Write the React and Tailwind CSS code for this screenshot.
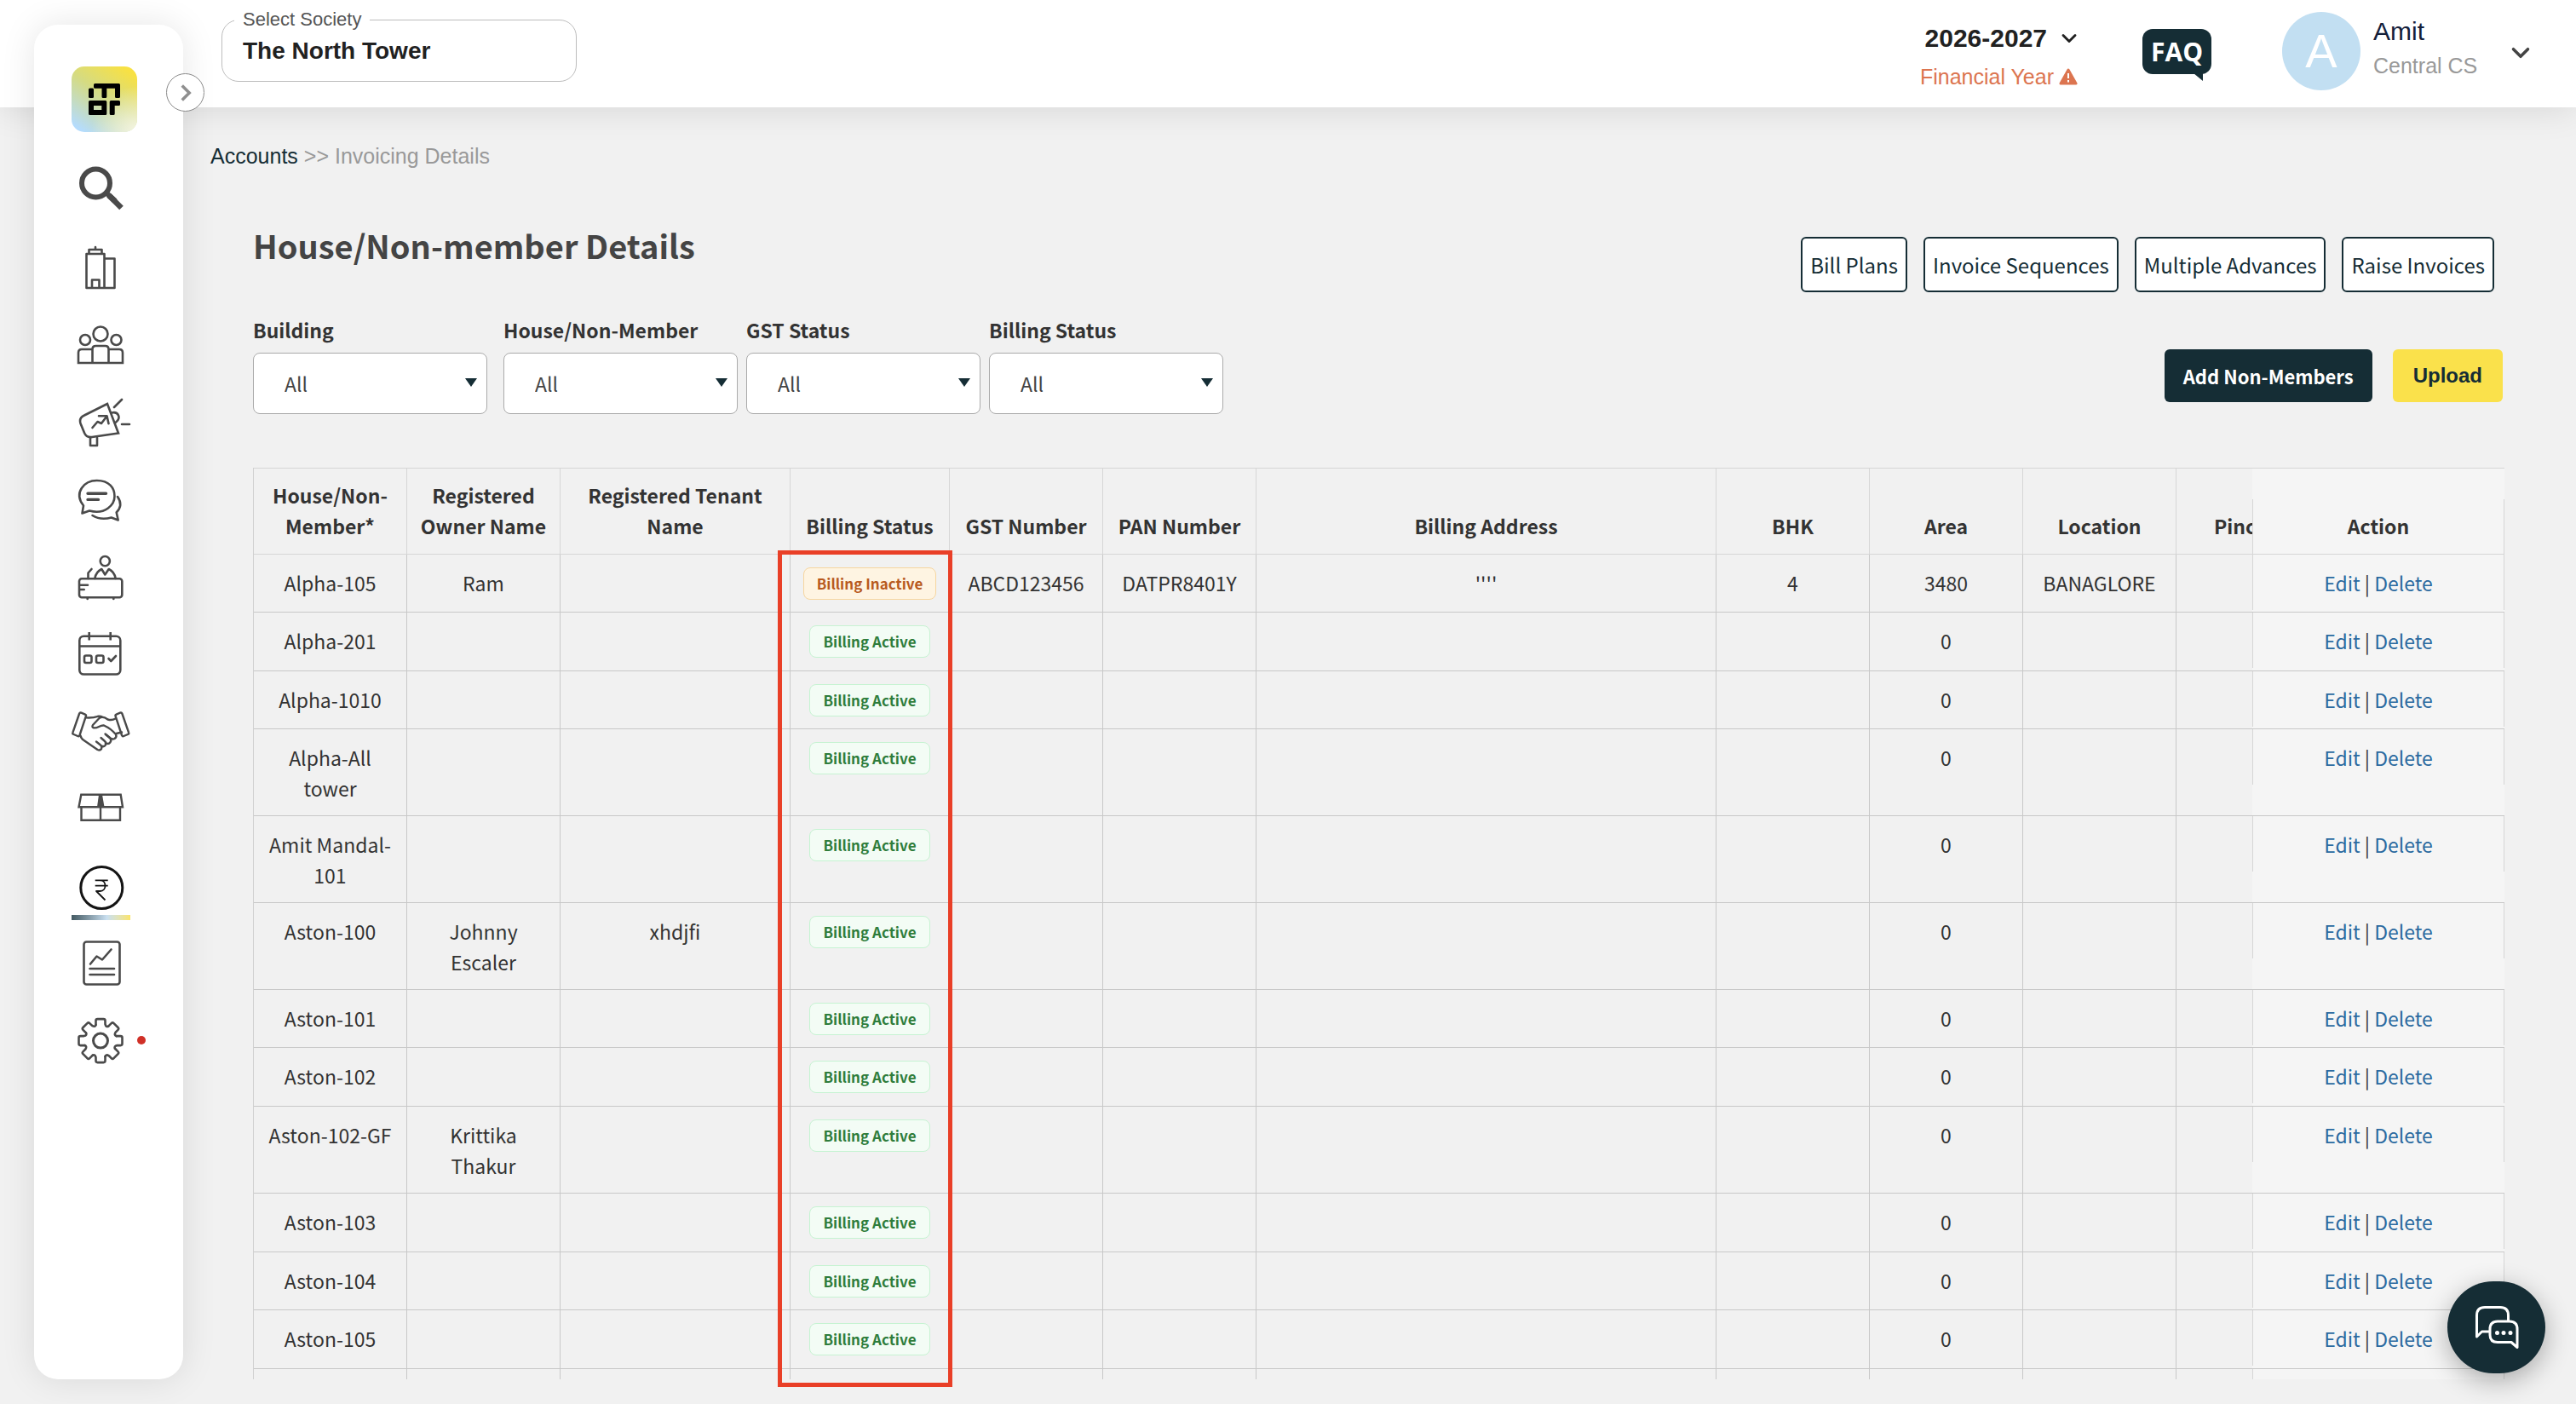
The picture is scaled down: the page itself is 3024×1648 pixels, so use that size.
// src/App.jsx - Invoicing details screen of the society accounts module
import React from 'react';
import { ChevronDown, ChevronRight } from 'lucide-react';

const iconProps = {
  width: 72,
  height: 68,
  viewBox: '0 0 72 68',
  fill: 'none',
  stroke: '#4a4a4a',
  strokeWidth: 2.6,
  strokeLinecap: 'round',
  strokeLinejoin: 'round',
  overflow: 'visible',
};

const menu = [
  {
    label: 'Search',
    icon: (
      <>
        <circle cx="28.5" cy="26" r="16.5" strokeWidth="6" />
        <path d="M44 40.5 58.5 55" strokeWidth="6.5" strokeLinecap="butt" />
        <path d="M44 40.5 50 46" strokeWidth="6.5" />
      </>
    ),
  },
  {
    label: 'Buildings',
    icon: (
      <path d="M17.5 18h21v40h-21zM38.5 23.5h12V58h-12zM20.5 18v-5h15v5M28 13V10M24 58v-9.5h8.5V58" />
    ),
  },
  {
    label: 'Residents',
    icon: (
      <>
        <circle cx="34" cy="21" r="8.5" />
        <circle cx="16" cy="28" r="6" />
        <circle cx="52.5" cy="28" r="6" />
        <path strokeLinejoin="miter" d="M24.5 55V39q0-4 4-4h11q4 0 4 4v16M24.5 39H12q-4 0-4 4v12h52V43q0-4-4-4H43.5" />
      </>
    ),
  },
  {
    label: 'Announcements',
    icon: (
      <>
        <path strokeLinejoin="miter" d="M42 12 15 25.5q-6.5 3-4.5 9.5L15 46q2.5 6 9 5l31-4.5Z" />
        <path d="M22 52v9h8v-9M47 22.5q6-1.5 8 3t-4 9M50 16l9-9M59 36h9M24.5 40l6-7 4.5 2 6.5-8.500M32 26.2h9.5l2 9" />
      </>
    ),
  },
  {
    label: 'Messages',
    icon: (
      <>
        <path d="M12.5 49.5 14 40.5C2 25 15 11 29.7 11S50.5 20 50.5 29.5 40 51.5 21 46.5Z" />
        <path d="M54 30q7 10-1.3 18.5l2 9-8-3Q34 58 24.5 52" />
        <path d="M19 26.3h21.5M19 33.4h12.5" strokeWidth="3.4" />
      </>
    ),
  },
  {
    label: 'Help desk',
    icon: (
      <>
        <rect x="9" y="35.3" width="50.3" height="22" rx="3" />
        <circle cx="39.3" cy="14.6" r="5.6" />
        <path d="M27.3 35q1.5-8 8-11l4 6.5 4.4-6.5q6.5 3 8 11M19.5 35v-6.5l4-4.5M10 42.8h9M10 48h4.7M18.7 57.5V59M49.3 57.5V59" />
      </>
    ),
  },
  {
    label: 'Bookings',
    icon: (
      <>
        <rect x="9.3" y="11.7" width="48" height="44.8" rx="5" />
        <path d="M9.3 23.5h48M20.7 7v9.5M45.7 7v9.5" strokeLinecap="butt" />
        <rect x="15" y="34.5" width="8.5" height="8.5" rx="2" />
        <rect x="29" y="34.5" width="8.5" height="8.5" rx="2" />
        <path d="m43.5 38 2.8 3 5.7-6" />
      </>
    ),
  },
  {
    label: 'Vendors',
    icon: (
      <g strokeWidth="2.4">
        <path d="M11.5 10.7 16 12.6q1.5.7.8 2.3L9.5 37q-.7 1.7-2.3 1L2.5 36q-1.7-.7-1-2.4L9 12q.8-2 2.5-1.3Z" />
        <path d="M57 10.7 52.5 12.6q-1.500.7-.8 2.300L59 37q.7 1.700 2.300 1l4.700-2q1.700-.7 1-2.400L59.500 12q-.8-2-2.500-1.300Z" />
        <path d="M17 16.4q8 .5 14-1.6 3-.6 5 .8M51.5 17.5q-4 2.5-9 1-6-4.500-10-1.500l-7.500 8q-1.500 2.500 1 3.300c5 1 7-3.500 12-2.800q8 3.500 14 10.500 1.500 3-1.500 5-3 1.500-6-1.500l-5-4" />
        <path d="M10.5 37.5q1 4 4 5.5l16 11q3 1.3 4.500-1 1-3-1-4.500l-5-4M34 48.500q3 3 5.500.5 2-3-.5-5L34.500 40M39.800 46q3.500 2 5.500-.5t0-5L40.500 36.500M52.500 35l6.500-1.500" />
      </g>
    ),
  },
  {
    label: 'Inventory',
    icon: (
      <>
        <path strokeLinejoin="miter" strokeWidth="2.4" d="M11.3 15.7h46.4L60 30.2H8.5ZM11.5 30.2v15.5H57V30.2M34 30v15" />
        <path d="M32 15.7h4l2.5 14.5h-8.5Z" fill="#4a4a4a" stroke="none" />
      </>
    ),
  },
  {
    label: 'Accounts',
    active: true,
    icon: (
      <g stroke="#141414">
        <circle cx="35.3" cy="34" r="24.5" strokeWidth="3" />
        <path strokeWidth="1.8" strokeLinecap="butt" d="M27.7 25.3h15M27.7 31.7h15M29 25.3h4.5c8 0 8 12.7 0 12.7H29l10.5 10.5" />
      </g>
    ),
  },
  {
    label: 'Reports',
    icon: (
      <>
        <rect x="14.5" y="6.5" width="42" height="50" rx="3" />
        <path d="m22 32.5 7.5-9 6.5 4 10.5-12M21.5 38h28.5M21.5 45h28.5" />
      </>
    ),
  },
  {
    label: 'Settings',
    dot: true,
    icon: (
      <g transform="translate(34 31.6)">
        <circle r="8.5" strokeWidth="3" />
        {[0, 45, 90, 135, 180, 225, 270, 315].map((angle) => (
          <path
            key={angle}
            transform={`rotate(${angle})`}
            d="M-5.5-18.5V-23.5Q-5.5-25.5-3.5-25.5H3.5Q5.5-25.5 5.5-23.5V-19.5Q6.5-15.5 9.2-17"
          />
        ))}
      </g>
    ),
  },
];

const filters = ['Building', 'House/Non-Member', 'GST Status', 'Billing Status'];

const columns = [
  { title: 'House/Non-Member*', width: 'w-[180px]' },
  { title: 'Registered Owner Name', width: 'w-[180px]' },
  { title: 'Registered Tenant Name', width: 'w-[270px]' },
  { title: 'Billing Status', width: 'w-[187px]' },
  { title: 'GST Number', width: 'w-[180px]' },
  { title: 'PAN Number', width: 'w-[180px]' },
  { title: 'Billing Address', width: 'w-[540px]' },
  { title: 'BHK', width: 'w-[180px]' },
  { title: 'Area', width: 'w-[180px]' },
  { title: 'Location', width: 'w-[180px]' },
  { title: 'Pincode', width: 'w-[180px]' },
];

const rows = [
  { house: 'Alpha-105', owner: 'Ram', inactive: true, gst: 'ABCD123456', pan: 'DATPR8401Y', address: "''''", bhk: '4', area: '3480', location: 'BANAGLORE' },
  { house: 'Alpha-201', area: '0' },
  { house: 'Alpha-1010', area: '0' },
  { house: 'Alpha-All tower', area: '0' },
  { house: 'Amit Mandal-101', area: '0' },
  { house: 'Aston-100', owner: 'Johnny Escaler', tenant: 'xhdjfi', area: '0' },
  { house: 'Aston-101', area: '0' },
  { house: 'Aston-102', area: '0' },
  { house: 'Aston-102-GF', owner: 'Krittika Thakur', area: '0' },
  { house: 'Aston-103', area: '0' },
  { house: 'Aston-104', area: '0' },
  { house: 'Aston-105', area: '0' },
];

function Sidebar() {
  return (
    <aside className="absolute left-10 top-[29px] bottom-[29px] w-[175px] rounded-[28px] bg-white pl-11 pt-[49px] shadow-[0_0_40px_rgba(0,0,0,0.1)]">
      <svg width="77" height="77" viewBox="0 0 77 77" role="img" aria-label="Logo">
        <defs>
          <linearGradient id="logo-bg" x1="0.2" y1="1" x2="0.85" y2="0.05">
            <stop offset="0" stopColor="#b5dcfc" />
            <stop offset="0.55" stopColor="#d5db82" />
            <stop offset="1" stopColor="#f8e143" />
          </linearGradient>
          <radialGradient id="logo-glow" cx="1" cy="1" r="0.7">
            <stop offset="0" stopColor="#f6f6e4" />
            <stop offset="1" stopColor="#f6f6e4" stopOpacity="0" />
          </radialGradient>
        </defs>
        <rect width="77" height="77" rx="15" fill="url(#logo-bg)" />
        <rect width="77" height="77" rx="15" fill="url(#logo-glow)" />
        <rect x="20" y="25.5" width="6" height="11.5" rx="1.5" />
        <path d="M27.5 20H55.5q1.5 0 1.5 1.5V35.5q0 1.5-1.5 1.5H52.5q-1.5 0-1.5-1.5V25.7H41.3V35.5q0 1.5-1.5 1.5H37q-1.5 0-1.5-1.5V25.7H27.5q-1.5 0-1.5-1.5V21.5q0-1.5 1.5-1.5Z" />
        <path fillRule="evenodd" d="M21.5 40H39.8q1.5 0 1.5 1.5V55.5q0 1.5-1.5 1.5H21.5q-1.5 0-1.5-1.5V41.5q0-1.5 1.5-1.5ZM26 46v5h9.3v-5Z" />
        <path d="M46.2 40H55.5q1.5 0 1.5 1.5v3q0 1.5-1.5 1.5H50.7V55.5q0 1.5-1.5 1.5H46.2q-1.5 0-1.5-1.5V41.5q0-1.5 1.5-1.5Z" />
      </svg>
      <button
        type="button"
        aria-label="Expand menu"
        className="absolute -right-[25px] top-[57px] flex size-[45px] items-center justify-center rounded-full border border-[#8a8a8a] bg-white text-[#8f8f8f]"
      >
        <ChevronRight size={34} strokeWidth={2.5} strokeLinecap="butt" strokeLinejoin="miter" />
      </button>
      <nav className="mt-[34px] flex flex-col gap-[23px]">
        {menu.map((item) => (
          <button key={item.label} type="button" aria-label={item.label} className="relative h-[68px] w-[72px]">
            <svg {...iconProps}>{item.icon}</svg>
            {item.active && (
              <span className="absolute left-0 top-[66px] h-1.5 w-[69px] bg-linear-to-r from-[#445a63] via-[#c9dff0] via-60% to-[#fbe467]" />
            )}
            {item.dot && <span className="absolute left-[77px] top-[26px] size-2.5 rounded-full bg-[#d03027]" />}
          </button>
        ))}
      </nav>
    </aside>
  );
}

function Header() {
  return (
    <header className="flex h-[126px] shrink-0 items-start bg-white pl-[260px] pr-[74px] font-['Liberation_Sans',sans-serif] shadow-[0_0_40px_rgba(0,0,0,0.12)]">
      <fieldset className="mt-2.5 h-[86px] w-[417px] rounded-[20px] border border-[#bdbdbd] pl-3.5">
        <legend className="px-2.5 text-[22px] leading-[26px] text-[#555]">
          <label htmlFor="society">Select Society</label>
        </legend>
        <input
          id="society"
          defaultValue="The North Tower"
          className="mt-1.5 w-[380px] px-2.5 text-[28px] leading-9 font-bold text-[#212121] outline-none"
        />
      </fieldset>

      <div className="ml-auto flex items-start">
        <div className="mt-[27px] flex flex-col items-end">
          <button type="button" className="-mr-1 flex items-center gap-3 text-[30px] leading-9 font-bold text-[#212121]">
            2026-2027
            <ChevronDown size={28} strokeWidth={2.5} />
          </button>
          <p className="mt-[9px] flex items-center gap-1.5 text-[25px] leading-9 text-[#dc7550]">
            Financial Year
            <svg width="22" height="20" viewBox="0 0 22 20" aria-hidden="true">
              <path d="M11 2 20 18H2Z" fill="#dc7550" stroke="#dc7550" strokeWidth="3" strokeLinejoin="round" />
              <path d="M11 6v6M11 14v2.5" stroke="#fff" strokeWidth="2" />
            </svg>
          </p>
        </div>

        <button type="button" className="relative ml-[76px] mt-[34px] h-[53px] w-[81px] rounded-[12px] bg-[#152d35] font-['Open_Sans',sans-serif] text-[30px] leading-[53px] font-bold text-white">
          FAQ
          <svg className="absolute right-2.5 top-[52px]" width="11" height="9" viewBox="0 0 11 9" aria-hidden="true">
            <path d="M0 0h11v9Z" fill="#152d35" />
          </svg>
        </button>

        <div className="ml-[83px] mt-3.5 flex size-[92px] items-center justify-center rounded-full bg-[#c2dff2] text-[56px] leading-none text-white">
          A
        </div>
        <div className="ml-[15px] mt-[19px] w-[164px]">
          <p className="text-[30px] leading-9 text-[#14203a]">Amit</p>
          <p className="mt-1 text-[25px] leading-9 text-[#999]">Central CS</p>
        </div>
        <button type="button" aria-label="Account menu" className="mt-[45px] w-0 text-[#444]">
          <ChevronDown size={34} strokeWidth={2.5} className="-ml-2" />
        </button>
      </div>
    </header>
  );
}

function Filter({ name }) {
  const id = name.toLowerCase().replace(/\W+/g, '-');
  return (
    <div className="flex flex-col first:mr-[9px]">
      <label htmlFor={id} className="text-[23px] leading-9 font-bold text-[#333]">{name}</label>
      <div className="relative mt-[9px]">
        <select id={id} className="h-[72px] w-[275px] appearance-none rounded-lg border border-[#aaa] bg-white pl-9 text-[23px] text-[#444]">
          <option>All</option>
        </select>
        <span className="pointer-events-none absolute right-3 top-[30px] border-x-[7px] border-t-[10px] border-x-transparent border-t-[#152d35]" />
      </div>
    </div>
  );
}

function Badge({ inactive }) {
  return inactive ? (
    <span className="inline-block rounded-lg border border-[#f6d6a0] bg-[#fef4e2] px-[15px] align-top text-[17px] leading-9 font-bold whitespace-nowrap text-[#b85a1e]">Billing Inactive</span>
  ) : (
    <span className="inline-block rounded-lg border border-[#c6f3d2] bg-[#f3fcf5] px-[15px] align-top text-[17px] leading-9 font-bold whitespace-nowrap text-[#2f7d3c]">Billing Active</span>
  );
}

const cell = 'border-b border-r border-[#c8c8c8] px-3 pt-[15px] pb-3.5 align-top';

export default function App() {
  return (
    <div className="relative flex h-screen flex-col overflow-hidden bg-[#f1f1f1] font-['Noto_Sans_CJK_SC',sans-serif] text-[23px] leading-9 text-[#333]">
      <Header />
      <Sidebar />

      <main className="flex min-h-0 flex-1 flex-col pb-[29px] pl-[297px] pr-[84px]">
        <nav className="-ml-[50px] mt-[39px] font-['Liberation_Sans',sans-serif] text-[25px] text-[#999]">
          <a href="#accounts" className="text-[#152d35]">Accounts</a> &gt;&gt; Invoicing Details
        </nav>

        <div className="mt-[59px] flex items-start justify-between">
          <h1 className="text-[38px] leading-[56px] font-bold text-[#444]">House/Non-member Details</h1>
          <div className="mr-3 mt-[18px] flex gap-[19px]">
            {['Bill Plans', 'Invoice Sequences', 'Multiple Advances', 'Raise Invoices'].map((title) => (
              <button key={title} type="button" className="h-[65px] rounded-md border-2 border-[#152d35] bg-white px-[9px] text-[24px] text-[#152d35]">
                {title}
              </button>
            ))}
          </div>
        </div>

        <div className="mt-[26px] flex items-start justify-between">
          <div className="flex gap-2.5">
            {filters.map((name) => (
              <Filter key={name} name={name} />
            ))}
          </div>
          <div className="mr-0.5 mt-[41px] flex gap-6">
            <button type="button" className="h-[62px] rounded-md bg-[#152d35] px-[22px] text-[22px] font-bold text-white">Add Non-Members</button>
            <button type="button" className="h-[62px] rounded-md bg-[#fae14b] px-6 font-['Liberation_Sans',sans-serif] text-[24px] font-bold text-[#152d35]">Upload</button>
          </div>
        </div>

        <div className="relative mt-[63px] min-h-0 flex-1">
          <div className="h-full overflow-auto [scrollbar-width:none]">
            <table className="w-[2734px] table-fixed border-separate border-spacing-0 border-l border-[#d0d0d0] text-center">
              <thead>
                <tr>
                  {columns.map((column) => (
                    <th key={column.title} scope="col" className={`${column.width} h-[102px] border-y border-r border-[#d6d6d6] px-3 pt-[13px] pb-[15px] align-bottom font-bold`}>
                      {column.title}
                    </th>
                  ))}
                  <th scope="col" className="sticky right-0 w-[296px] border-y border-[#d6d6d6] bg-[#f5f5f5] p-0 align-bottom font-bold">
                    <div className="border-x border-[#d6d6d6] pt-[13px] pb-[15px]">Action</div>
                  </th>
                </tr>
              </thead>
              <tbody>
                {rows.map((row) => (
                  <tr key={row.house} className="odd:h-[68px] even:h-[69px]">
                    <td className={cell}>{row.house}</td>
                    <td className={cell}>{row.owner}</td>
                    <td className={cell}>{row.tenant}</td>
                    <td className={cell}><Badge inactive={row.inactive} /></td>
                    <td className={cell}>{row.gst}</td>
                    <td className={cell}>{row.pan}</td>
                    <td className={cell}>{row.address}</td>
                    <td className={cell}>{row.bhk}</td>
                    <td className={cell}>{row.area}</td>
                    <td className={cell}>{row.location}</td>
                    <td className={cell} />
                    <td className="sticky right-0 border-b border-[#c8c8c8] bg-[#f5f5f5] p-0 align-top">
                      <div className="border-x border-[#d6d6d6] pt-[15px] pb-3.5">
                        <a href="#edit" className="text-[#2c6aa0]">Edit</a> | <a href="#delete" className="text-[#2c6aa0]">Delete</a>
                      </div>
                    </td>
                  </tr>
                ))}
                <tr className="h-[68px]">
                  {columns.map((column) => (
                    <td key={column.title} className={cell} />
                  ))}
                  <td className="sticky right-0 border-x border-[#d6d6d6] bg-[#f5f5f5]" />
                </tr>
              </tbody>
            </table>
          </div>
          {/* highlight round the billing status column */}
          <div className="pointer-events-none absolute -bottom-[9px] left-[616px] top-[97px] w-[205px] border-[5px] border-[#e93f27]" />
        </div>
      </main>

      <button
        type="button"
        aria-label="Open chat"
        className="absolute bottom-9 right-9 flex h-[108px] w-[115px] items-center justify-center rounded-full bg-[#152d35] shadow-[0_8px_30px_rgba(0,0,0,0.3)]"
      >
        <svg width="52" height="52" viewBox="0 0 52 52" fill="none" stroke="#fff" strokeWidth="3" strokeLinejoin="round" aria-hidden="true">
          <path d="M17 31H8.5L2.5 37V12q0-9.5 9.5-9.5h18Q39.5 2.5 39.5 12v6" />
          <path d="M50 49.5V28q0-9-9-9H27q-9 0-9 9v7q0 8.5 9 8.5h16Z" />
          <path d="M26.5 32.5h0M34 32.5h0M42 32.5h0" strokeWidth="5" strokeLinecap="round" />
        </svg>
      </button>
    </div>
  );
}
